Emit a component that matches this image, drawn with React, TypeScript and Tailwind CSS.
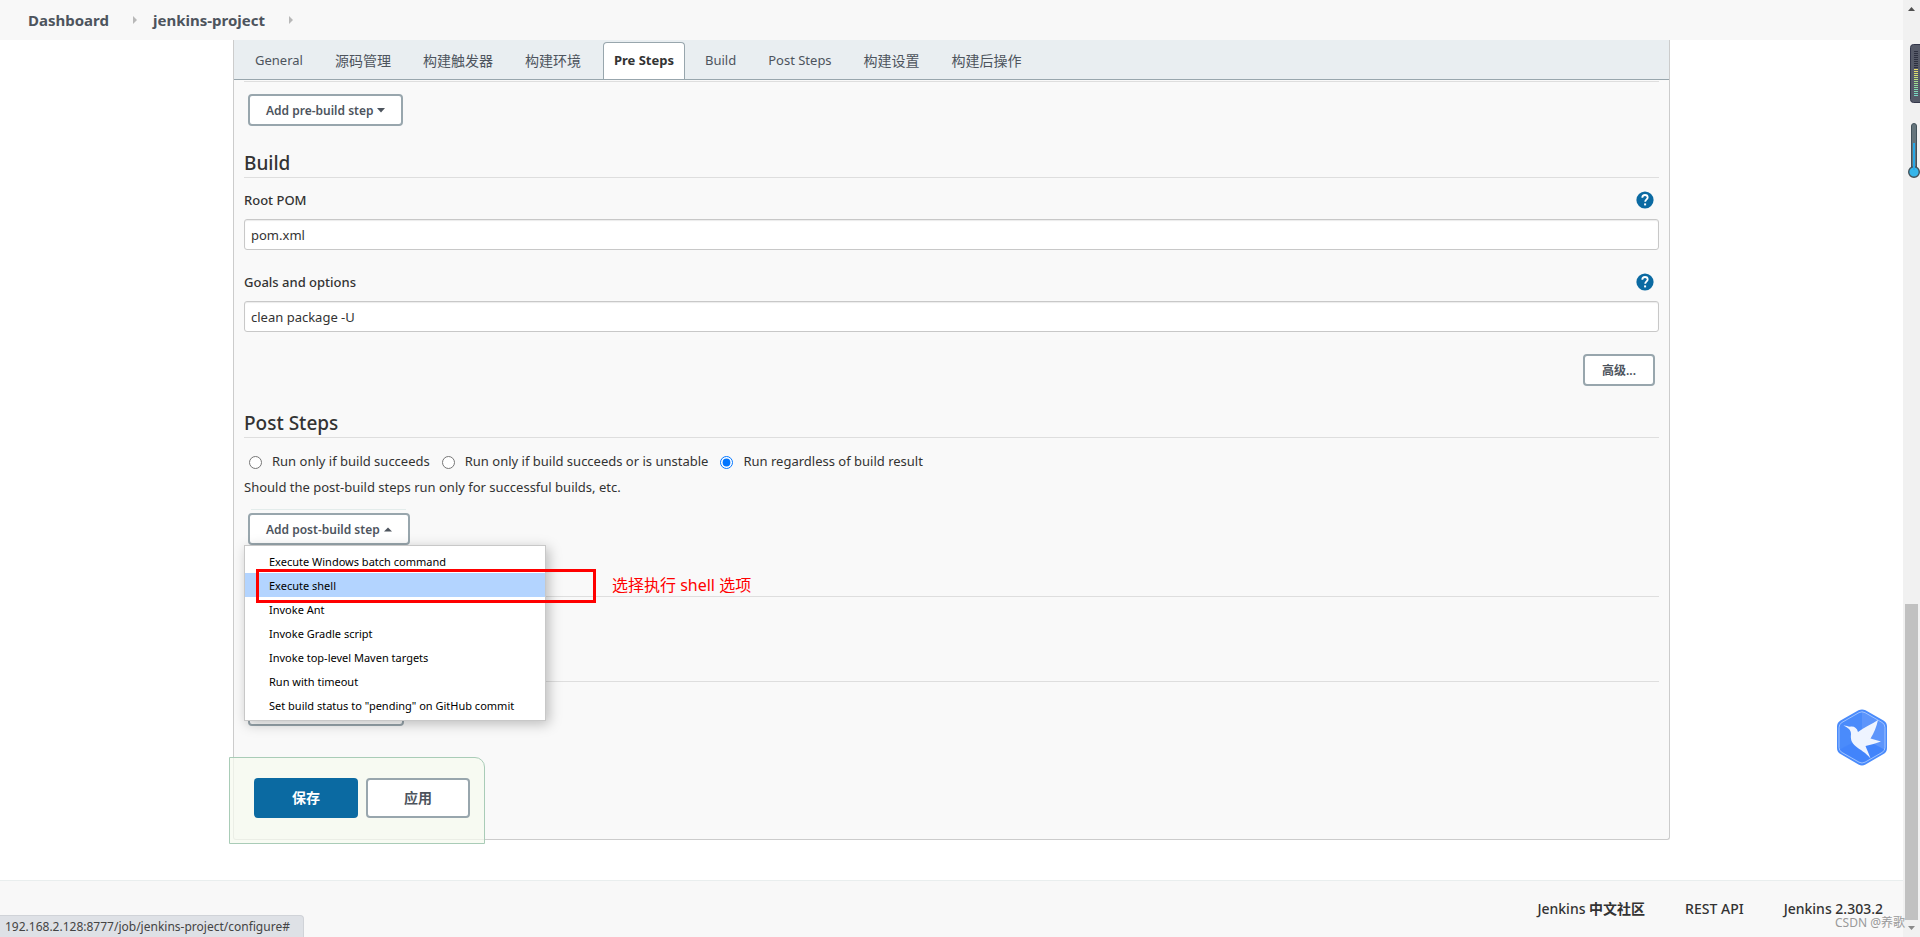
import React, { useState } from "react";

const FONT = "font-['Noto_Sans','Noto_Sans_CJK_SC',sans-serif]";

const tabs = [
  "General",
  "源码管理",
  "构建触发器",
  "构建环境",
  "Pre Steps",
  "Build",
  "Post Steps",
  "构建设置",
  "构建后操作",
];

const runConditions = [
  "Run only if build succeeds",
  "Run only if build succeeds or is unstable",
  "Run regardless of build result",
];

const stepOptions = [
  "Execute Windows batch command",
  "Execute shell",
  "Invoke Ant",
  "Invoke Gradle script",
  "Invoke top-level Maven targets",
  "Run with timeout",
  'Set build status to "pending" on GitHub commit',
];

function CrumbArrow() {
  return (
    <svg width="4" height="8" viewBox="0 0 4 8" className="shrink-0" aria-hidden="true">
      <path d="M0 0L4 4L0 8Z" fill="#b8b8b8" />
    </svg>
  );
}

function HelpIcon() {
  return (
    <svg width="18" height="18" viewBox="0 0 18 18" aria-hidden="true">
      <circle cx="9" cy="9" r="8.6" fill="#0b6aa2" />
      <path
        d="M6.3 6.7C6.3 5 7.5 4 9 4s2.7 1 2.7 2.5c0 1.8-2.5 2-2.5 4.3"
        fill="none"
        stroke="#fff"
        strokeWidth="1.8"
      />
      <rect x="8.1" y="12.4" width="2" height="2" fill="#fff" />
    </svg>
  );
}

function SectionTitle({ children }: { children?: React.ReactNode }) {
  return (
    <h2 className="mt-5 h-8 border-b border-[#dedede] text-[19px] leading-[34px] font-medium text-[#333]">
      {children}
    </h2>
  );
}

function Field({ id, label, value }: { id: string; label: string; value: string }) {
  return (
    <div className="mb-[22px]">
      <div className="mb-[9px] flex h-5 items-center justify-between pr-[5px]">
        <label htmlFor={id} className="text-[13px] leading-5 font-medium text-[#333]">
          {label}
        </label>
        <a href="#help">
          <HelpIcon />
        </a>
      </div>
      <input
        id={id}
        type="text"
        defaultValue={value}
        className="block h-[31px] w-full rounded-[3px] border border-[#c8c8c8] bg-white px-[6px] text-[13px] text-[#333] shadow-[inset_0_1px_1px_rgba(0,0,0,0.08)] outline-none"
      />
    </div>
  );
}

function StepButton({ children, up }: { children: React.ReactNode; up?: boolean }) {
  return (
    <button
      type="button"
      className="flex h-8 items-center gap-1 rounded-[4px] border-2 border-[#98a6ad] bg-white px-4 pt-[2px] text-xs font-semibold text-[#4d545d]"
    >
      {children}
      <svg
        width="8"
        height="5"
        viewBox="0 0 8 5"
        className="mb-[2px] shrink-0"
        aria-hidden="true"
      >
        <path d={up ? "M0 4.5L4 0.5L8 4.5Z" : "M0 0L8 0L4 4.5Z"} fill="#4d545d" />
      </svg>
    </button>
  );
}

function Bird() {
  return (
    <svg width="52" height="57" viewBox="0 0 52 57" aria-hidden="true">
      <path
        d="M22.5 1.3Q26 -0.5 29.5 1.3L47.5 11.5Q51 13.7 51 17.5V39Q51 43 47.5 45L29.5 55.5Q26 57.3 22.5 55.5L4.5 45Q1 43 1 39V17.5Q1 13.7 4.5 11.5Z"
        fill="#4a8bfb"
      />
      <path d="M26 28.5V2L49 15V41Z" fill="#6a9dfc" opacity="0.6" />
      <path d="M26 28.5L49 41L27 54.5L3 41Z" fill="#3a7dfa" opacity="0.45" />
      <path
        d="M23 3.6Q26 2 29 3.6L46 13.4Q49 15.2 49 18.5V38.5Q49 41.8 46 43.5L29 53.2Q26 54.8 23 53.2L6 43.5Q3 41.8 3 38.5V18.5Q3 15.2 6 13.4Z"
        fill="none"
        stroke="#a8c8ff"
        strokeWidth="0.9"
      />
      <path
        d="M7.5 16.5C10.5 16.3 12 18 15 17.6C18.5 17.3 21 19.3 22 23C28 18 36 15.5 42 11C40.5 18 38 24 34.5 29.5L45 32.5C40 34.5 35 35.5 29.5 37C31 41 33 45 34.5 49.5C29.5 43 24 41 20 37.5C15 33.5 14.5 30 15 25C15 20 11.5 18.8 7.5 16.5Z"
        fill="#eef4ff"
      />
    </svg>
  );
}

function LevelMeter() {
  const colors = ["#e8dc6a", "#d9e070", "#bfe07c", "#a4df8c", "#8fdd9f", "#82dbb2", "#78d9c4"];
  return (
    <svg width="10" height="60" viewBox="0 0 10 60" aria-hidden="true">
      <rect x="0.5" y="0.5" width="20" height="58" rx="3" fill="#565a68" stroke="#33364a" />
      {Array.from({ length: 23 }, (_, i) => (
        <rect
          key={i}
          x="4"
          y={7 + i * 2}
          width="4"
          height="1"
          fill={i < 9 ? "#2d3040" : colors[Math.floor((i - 9) / 2)]}
        />
      ))}
    </svg>
  );
}

function Thermometer() {
  return (
    <svg width="12" height="56" viewBox="0 0 12 56" aria-hidden="true">
      <rect x="3.5" y="0.5" width="5" height="48" rx="2.5" fill="#66757c" stroke="#43525a" />
      <circle cx="6" cy="49" r="5.3" fill="#36b6ea" stroke="#43525a" strokeWidth="1.4" />
      <rect x="5" y="20" width="2" height="27" fill="#27a9e8" />
    </svg>
  );
}

export default function App() {
  const [condition, setCondition] = useState(2);

  return (
    <div className={`relative flex min-h-screen overflow-hidden bg-white text-[#333] ${FONT}`}>
      <div className="flex min-w-0 flex-1 flex-col">
        <header className="flex h-10 items-center gap-5 bg-[#f8f8f8] pl-7 text-[15px] font-bold text-[#4d545d]">
          <a href="#dashboard" className="mr-1">
            Dashboard
          </a>
          <CrumbArrow />
          <a href="#project" className="mr-1 -ml-1">
            jenkins-project
          </a>
          <CrumbArrow />
        </header>

        <main className="px-[233px]">
          <form
            className="relative rounded-b-[3px] border-x border-b border-[#ccc] bg-[#f9f9f9] pb-[113px]"
            onSubmit={(e) => e.preventDefault()}
          >
            <nav className="flex h-10 items-end border-b border-[#98a6ad] bg-[#e9eef1] pl-[10px]">
              {tabs.map((tab) => (
                <a
                  key={tab}
                  href="#tab"
                  className={
                    tab === "Pre Steps"
                      ? "mr-1 ml-[6px] flex h-[37px] items-center rounded-t-[4px] border-x border-t border-[#98a6ad] bg-white px-[10px] text-[13px] font-bold text-[#333]"
                      : tab === "General"
                        ? "flex h-[37px] items-center pr-4 pl-[11px] text-[13px] text-[#4d545d]"
                        : /^[A-Z]/.test(tab)
                          ? "flex h-[37px] items-center px-4 text-[13px] text-[#4d545d]"
                          : "flex h-[37px] items-center px-4 text-sm text-[#4d545d]"
                  }
                >
                  {tab}
                </a>
              ))}
            </nav>

            <div className="px-[10px] pt-px">
              <hr className="border-[#dedede]" />
              <div className="mt-3 ml-1 flex">
                <StepButton>Add pre-build step</StepButton>
              </div>

              <SectionTitle>Build</SectionTitle>
              <div className="pt-3">
                <Field id="pom" label="Root POM" value="pom.xml" />
                <Field id="goals" label="Goals and options" value="clean package -U" />
              </div>
              <div className="mr-1 flex justify-end">
                <button
                  type="button"
                  className="h-8 w-[72px] rounded-[4px] border-2 border-[#98a6ad] bg-white pt-[2px] text-xs font-semibold text-[#4d545d]"
                >
                  高级...
                </button>
              </div>

              <SectionTitle>Post Steps</SectionTitle>
              <div className="mt-[14px] flex h-5 items-center gap-3 pl-[5px] text-[13px]">
                {runConditions.map((text, i) => (
                  <label key={text} className="flex items-center gap-[10px] whitespace-nowrap">
                    <input
                      type="radio"
                      name="condition"
                      checked={condition === i}
                      onChange={() => setCondition(i)}
                      className="h-[13px] w-[13px] accent-[#0075ff]"
                    />
                    {text}
                  </label>
                ))}
              </div>
              <p className="mt-[5px] text-[13px] leading-5">
                Should the post-build steps run only for successful builds, etc.
              </p>

              <div className="relative z-10 mt-3 flex w-fit flex-col items-start">
                <div className="mr-1 ml-[7px] h-px self-stretch bg-[#e3eceb]" />
                <div className="mt-[3px] ml-1">
                  <StepButton up>Add post-build step</StepButton>
                </div>
                <ul className="absolute top-full left-0 w-[302px] border border-[#c8c8c8] bg-white py-[3px] text-[11px] text-black shadow-[3px_3px_12px_rgba(0,0,0,0.25)]">
                  {stepOptions.map((option) => (
                    <li key={option}>
                      <a
                        href="#step"
                        className={
                          option === "Execute shell"
                            ? "block h-6 bg-[#b3d4ff] pl-6 leading-[26px] whitespace-nowrap"
                            : "block h-6 pl-6 leading-[26px] whitespace-nowrap"
                        }
                      >
                        {option}
                      </a>
                    </li>
                  ))}
                </ul>
                <div className="absolute top-[60px] left-3 h-[34px] w-[340px] border-3 border-[#ff0000]" />
                <p className="absolute top-16 left-[368px] text-base leading-6 whitespace-nowrap text-[#ff0000]">
                  选择执行 shell 选项
                </p>
              </div>

              <div className="mt-5 h-8 border-b border-[#dedede]" />
              <div className="mt-[53px] h-8 border-b border-[#dedede]" />
              <div className="mt-3 ml-1 h-8 w-[156px] rounded-[4px] border-2 border-[#98a6ad] bg-white" />
            </div>

            <div className="absolute -bottom-[5px] -left-[5px] flex h-[87px] gap-2 rounded-tr-[10px] border border-[#a9ccb7] bg-[#f5f9ef]/75 pt-5 pr-[14px] pl-6">
              <button
                type="submit"
                className="h-10 w-[104px] rounded-[4px] bg-[#0b6aa2] text-sm font-bold text-white"
              >
                保存
              </button>
              <button
                type="button"
                className="h-10 w-[104px] rounded-[4px] border-2 border-[#98a6ad] bg-white text-sm font-semibold text-[#4d545d]"
              >
                应用
              </button>
            </div>
          </form>
        </main>

        <footer className="mt-10 flex flex-1 items-start justify-end gap-10 border-t border-[#e9eeee] bg-[#f8f8f8] pt-5 pr-5 text-sm leading-4 font-medium text-[#333]">
          <a href="#community">
            Jenkins <span className="font-bold">中文社区</span>
          </a>
          <a href="#api">REST API</a>
          <a href="#version">Jenkins 2.303.2</a>
        </footer>
      </div>

      <div className="flex w-[17px] shrink-0 flex-col items-center justify-between bg-[#f1f1f1] pt-[7px] pb-[7px]">
        <svg width="7" height="4" viewBox="0 0 7 4" aria-hidden="true">
          <path d="M0 4L3.5 0L7 4Z" fill="#505050" />
        </svg>
        <div className="mt-auto mb-[6px] h-[316px] w-[13px] bg-[#c1c1c1]" />
        <svg width="7" height="4" viewBox="0 0 7 4" aria-hidden="true">
          <path d="M0 0L7 0L3.5 4Z" fill="#8a8a8a" />
        </svg>
      </div>

      <div className="absolute top-11 right-0">
        <LevelMeter />
      </div>
      <div className="absolute top-[123px] right-0">
        <Thermometer />
      </div>
      <div className="absolute right-8 bottom-[171px]">
        <Bird />
      </div>
      <div className="absolute right-[15px] bottom-[6px] text-xs leading-4 text-[#999]">
        CSDN @养歌
      </div>
      <div className="absolute bottom-0 left-0 h-[22px] rounded-tr-[4px] border-t border-r border-[#d0d3d8] bg-[#dee1e6] pr-[13px] pl-[5px] text-xs leading-[22px] text-[#444]">
        192.168.2.128:8777/job/jenkins-project/configure#
      </div>
    </div>
  );
}
